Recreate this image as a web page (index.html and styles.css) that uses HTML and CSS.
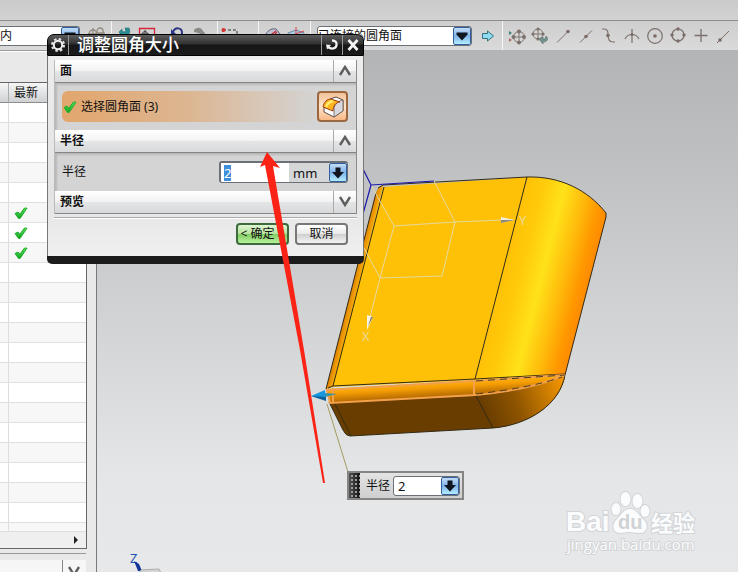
FILE: index.html
```html
<!DOCTYPE html>
<html lang="zh-CN">
<head>
<meta charset="utf-8">
<meta name="viewport" content="width=device-width, initial-scale=1">
<title>调整圆角大小</title>
<link rel="stylesheet" href="styles.css">
</head>
<body>
<svg class="defs" width="0" height="0" aria-hidden="true">
  <defs>
    <linearGradient id="tick-fill" x1="0" y1="0" x2="0" y2="1">
      <stop offset="0" stop-color="#5be05b"/><stop offset="1" stop-color="#12a31f"/>
    </linearGradient>
    <symbol id="tick" viewBox="0 0 14 14">
      <path d="M1 7.500 4 6l1.800 2.200L10.500 2l2.500.2L6 12.600 4.500 12.400Z" fill="url(#tick-fill)" stroke="#1fae2e" stroke-width="1" stroke-linejoin="round"/>
    </symbol>
    <symbol id="arrow-down" viewBox="0 0 16 16">
      <path d="M5.500 2.500h5v4.500h3.500L8 13.500 2 7h3.500z" fill="#10151f"/>
    </symbol>
    <symbol id="triangle-down" viewBox="0 0 16 16">
      <path d="M2.500 4.500h11v2L8 12.500 2.500 6.500z" fill="#10151f"/>
    </symbol>
    <symbol id="chevron-up" viewBox="0 0 14 12">
      <path d="M2 10 7 2l5 8" fill="none" stroke="#5e5e5e" stroke-width="2.400"/>
    </symbol>
    <symbol id="chevron-down" viewBox="0 0 14 12">
      <path d="M2 1l5 8 5-8" fill="none" stroke="#5e5e5e" stroke-width="2.400"/>
    </symbol>
  </defs>
</svg>
<div class="app">
  <header class="band"></header>
  <div class="toolbar" role="toolbar" aria-label="选择">
    <div class="group group-scope">
      <div class="combo combo-scope">
        <select aria-label="范围"><option>内</option></select>
        <span class="drop"><svg width="16" height="16"><use href="#triangle-down"/></svg></span>
      </div>
      <button class="tool" aria-label="锁定"><svg width="18" height="18" viewBox="0 0 18 18" fill="none" stroke="#948b80" stroke-width="1.300"><circle cx="6" cy="7" r="4"/><path d="M1 7h10M6 1v11"/><path d="M10 7V4a3 3 0 0 1 6 0v3"/><path d="M9 6h8v6H9z" fill="#a89f90"/></svg></button>
    </div>
    <div class="group group-edit">
      <button class="tool" aria-label="返回"><svg width="18" height="18" viewBox="0 0 18 18"><path d="M4 5 7 2v2l2 1 2-1-1-3h4c2 4 0 9-6 9v2z" fill="#2b8f92" stroke="#1e6c74" stroke-width=".6"/></svg></button>
      <button class="tool" aria-label="定向"><svg width="18" height="18" viewBox="0 0 18 18" fill="none"><path d="M1.500 1.500h15v14h-15z" stroke="#d6263a" stroke-width="1.300"/><circle cx="7" cy="7" r="2.500" stroke="#444"/><path d="M3 7h8M7 3v8" stroke="#444"/></svg></button>
      <span class="caret"></span>
      <button class="tool" aria-label="撤消"><svg width="18" height="18" viewBox="0 0 18 18"><path d="M5 5c2-5 9-5 9 1 0 3-2 5-4 6" fill="none" stroke="#2b3587" stroke-width="2"/><path d="M3 2v6h6z" fill="#2b3587"/></svg></button>
      <button class="tool" aria-label="重做"><svg width="18" height="18" viewBox="0 0 18 18"><path d="M3 3c3-3 7-3 9 1l2 2v3L7 6 3 5z" fill="#8a8a86"/></svg></button>
    </div>
    <div class="group group-box">
      <button class="tool" aria-label="框选"><svg width="18" height="18" viewBox="0 0 18 18"><path d="M2 3h14v12H2z" fill="none" stroke="#333" stroke-dasharray="3 2"/><circle cx="2.500" cy="3" r="2" fill="#d8302a"/></svg></button>
      <span class="caret"></span>
    </div>
    <div class="group group-view">
      <button class="tool" aria-label="着色"><svg width="18" height="18" viewBox="0 0 18 18"><path d="M1 9c2-5 6-8 11-7l4 5v5H1z" fill="#bfc3d4" stroke="#5b5f72"/><path d="M4 10 12 4M7 11l6-6" stroke="#c52f3a" stroke-width="1.300"/></svg></button>
      <button class="tool" aria-label="截面"><svg width="20" height="18" viewBox="0 0 20 18"><path d="M2 6 10 3l8 3v8H2z" fill="#a9cfe8" stroke="#73849a"/><path d="M10 0v16M1 10 18 4" stroke="#d9404b"/></svg></button>
    </div>
    <div class="group group-filter">
      <div class="combo combo-filter">
        <select aria-label="面规则"><option>已连接的圆角面</option></select>
        <span class="drop"><svg width="16" height="16"><use href="#triangle-down"/></svg></span>
      </div>
      <button class="tool" aria-label="下一个"><svg width="14" height="14" viewBox="0 0 14 14"><path d="M1.500 4.500h5V2l6 5-6 5V9.500h-5z" fill="#8edcf0" stroke="#33707d"/></svg></button>
    </div>
    <div class="group group-snap">
      <button class="tool" aria-label="启用捕捉"><svg width="18" height="18" viewBox="0 0 18 18" fill="none" stroke="#81766f"><circle cx="11" cy="10" r="5.500"/><path d="M5 10h12M11 4v12"/><g fill="#7c716b" stroke="none"><circle cx="11" cy="4.500" r="2"/><circle cx="11" cy="15.500" r="2"/><circle cx="5.500" cy="10" r="2"/><circle cx="16" cy="10" r="2"/><path d="M1 4l3 2-3 2z" fill="#3b8377"/><path d="M1 11l3 2-3 2z" fill="#a8706a"/></g></svg></button>
      <button class="tool" aria-label="清除捕捉"><svg width="18" height="18" viewBox="0 0 18 18" fill="none" stroke="#81766f"><circle cx="7" cy="7" r="5"/><path d="M2 7h10M7 2v10"/><g fill="#7c716b" stroke="none"><circle cx="7" cy="2" r="1.600"/><circle cx="7" cy="12" r="1.600"/><circle cx="2" cy="7" r="1.600"/><circle cx="12" cy="7" r="1.600"/></g><path d="M8 12l4-2v2c2 0 3-1 3-3 3 3 1 6-3 6v2z" fill="#73908f" stroke="#728583"/></svg></button>
      <button class="tool" aria-label="端点"><svg width="18" height="18" viewBox="0 0 18 18"><path d="M3 15.500 14 4.500" stroke="#7b706b"/><circle cx="14" cy="4.500" r="1.800" fill="#7b6a66"/></svg></button>
      <button class="tool" aria-label="中点"><svg width="18" height="18" viewBox="0 0 18 18"><path d="M3 15.500 15 3.500" stroke="#7b706b"/><circle cx="9" cy="9.500" r="1.800" fill="#7b6a66"/></svg></button>
      <button class="tool" aria-label="控制点"><svg width="18" height="18" viewBox="0 0 18 18"><path d="M2 2h2c4 0 4 3 4 6 0 4 1 7 5 7h2" fill="none" stroke="#7b706b" stroke-width="1.200"/><circle cx="8" cy="8.500" r="1.800" fill="#7b6a66"/></svg></button>
      <button class="tool" aria-label="交点"><svg width="18" height="18" viewBox="0 0 18 18" fill="none" stroke="#7b706b" stroke-width="1.200"><path d="M9 2v14M2 12c3-6 11-6 14 0"/><circle cx="9" cy="7.500" r="1.500" fill="#7b6a66" stroke="none"/></svg></button>
      <button class="tool" aria-label="圆心"><svg width="18" height="18" viewBox="0 0 18 18"><circle cx="9" cy="9" r="7.300" fill="none" stroke="#7b706b" stroke-width="1.200"/><circle cx="9" cy="9" r="1.800" fill="#7b6a66"/></svg></button>
      <button class="tool" aria-label="象限点"><svg width="18" height="18" viewBox="0 0 18 18"><circle cx="9" cy="8" r="6" fill="none" stroke="#7b706b" stroke-width="1.200"/><g fill="#7b6a66"><circle cx="9" cy="2" r="1.700"/><circle cx="9" cy="14" r="1.700"/><circle cx="3" cy="8" r="1.700"/><circle cx="15" cy="8" r="1.700"/></g></svg></button>
      <button class="tool" aria-label="现有点"><svg width="18" height="18" viewBox="0 0 18 18"><path d="M9 2v13M2.500 8.500h13" stroke="#7b706b" stroke-width="1.300"/></svg></button>
      <button class="tool" aria-label="曲线上的点"><svg width="18" height="18" viewBox="0 0 18 18"><path d="M2 16 14 4" stroke="#7b706b"/><circle cx="5" cy="13" r="1.800" fill="#7b6a66"/></svg></button>
    </div>
  </div>

  <main class="workspace">
    <aside class="navigator">
      <div class="nav-title"></div>
      <div class="nav-box">
        <div class="rows">
          <table>
            <thead><tr><th class="name"></th><th>最新</th></tr></thead>
            <tbody>
              <tr><td></td><td></td></tr><tr><td></td><td></td></tr><tr><td></td><td></td></tr>
              <tr><td></td><td></td></tr><tr><td></td><td></td></tr>
              <tr><td></td><td><svg width="14" height="14"><use href="#tick"/></svg></td></tr>
              <tr><td></td><td><svg width="14" height="14"><use href="#tick"/></svg></td></tr>
              <tr><td></td><td><svg width="14" height="14"><use href="#tick"/></svg></td></tr>
              <tr><td></td><td></td></tr><tr><td></td><td></td></tr><tr><td></td><td></td></tr>
              <tr><td></td><td></td></tr><tr><td></td><td></td></tr><tr><td></td><td></td></tr>
              <tr><td></td><td></td></tr><tr><td></td><td></td></tr><tr><td></td><td></td></tr>
              <tr><td></td><td></td></tr><tr><td></td><td></td></tr><tr><td></td><td></td></tr>
              <tr><td></td><td></td></tr><tr><td></td><td></td></tr>
            </tbody>
          </table>
        </div>
        <div class="scroll"><button aria-label="向右滚动"><svg width="6" height="8" viewBox="0 0 6 8"><path d="M1 0v8l4-4z" fill="#222"/></svg></button></div>
      </div>
      <div class="nav-foot">
        <button aria-label="展开"><svg width="14" height="12"><use href="#chevron-down"/></svg></button>
      </div>
    </aside>

    <section class="viewport" aria-label="图形窗口">
      <svg class="scene" width="100%" height="100%">
        <defs>
          <linearGradient id="round" gradientUnits="userSpaceOnUse" x1="527" y1="177" x2="609" y2="198">
            <stop offset="0" stop-color="#ffc107"/><stop offset=".22" stop-color="#ffcb0a"/><stop offset=".46" stop-color="#ffe21a"/><stop offset=".72" stop-color="#ffb90a"/><stop offset=".9" stop-color="#ff9800"/><stop offset="1" stop-color="#ff8c00"/>
          </linearGradient>
          <linearGradient id="side" gradientUnits="userSpaceOnUse" x1="351" y1="286" x2="359" y2="288">
            <stop offset="0" stop-color="#d87900"/><stop offset="1" stop-color="#ffb60a"/>
          </linearGradient>
          <linearGradient id="lip" gradientUnits="userSpaceOnUse" x1="400" y1="383" x2="401" y2="400">
            <stop offset="0" stop-color="#ffb90a"/><stop offset=".4" stop-color="#f49c05"/><stop offset="1" stop-color="#a96200"/>
          </linearGradient>
          <linearGradient id="under" gradientUnits="userSpaceOnUse" x1="485" y1="412" x2="562" y2="382">
            <stop offset="0" stop-color="#693d00"/><stop offset=".4" stop-color="#8f5500"/><stop offset="1" stop-color="#f09400"/>
          </linearGradient>
        </defs>
        <g transform="translate(-97 -50)">
          <path d="M383 187 527 177 475 380 332 387z" fill="#ffc107"/>
          <path d="M527 177C560 176 588 190 606 213V217L565 375 475 380z" fill="url(#round)"/>
          <path d="M383 186q-5 0-7 7L326 389l7-2z" fill="url(#side)"/>
          <path d="M329 402 475 395Q530 390 565 376C560 404 529 425 493 428L350 436q-4 0-7-6z" fill="#693d00"/>
          <path d="M475 395Q530 390 565 376C560 404 529 425 493 428z" fill="url(#under)"/>
          <path d="M326 389 475 380 565 375Q530 391 475 396L330 403z" fill="url(#lip)"/>
          <g fill="none" stroke="#332b17">
            <path d="M378 188 383 185 527 177C560 176 588 190 606 213V217L565 375C560 404 529 425 493 428L350 436q-4 0-7-6L329 402"/>
            <path d="M527 177 475 379M476 396 493 428M384 187 333 386M376 193 326 389M335 404 351 436"/>
            <path d="M328 388 333 386 475 379 565 374"/>
          </g>
          <path d="M327 390 475 381 565 375Q530 390 475 395L330 403zM474 381v14M333 388v14" fill="none" stroke="#f2a04b" stroke-width="2"/>
          <path d="M476 381 565 375M476 394Q530 388 562 377" fill="none" stroke="#4c3a1d" stroke-dasharray="7 5"/>
          <g fill="none" stroke="#e5d9a0">
            <path d="M371 185 394 226 455 222 434 181M394 226 380 278 442 276 455 222 502 220M380 278 370 317M364 248 380 278"/>
          </g>
          <path d="M363 169 371 185 434 181M371 185 363 214" fill="none" stroke="#1a18ad" stroke-width="1.200"/>
          <path d="M501 217 515 220 501 223z" fill="#f1eee0"/><path d="M501 220h14l-14 3z" fill="#8e8a78"/>
          <path d="M367 315 373 317 367 330z" fill="#f6f3e6"/><path d="M371 317h2l-5 9z" fill="#7a7668"/>
          <text class="axis" x="519" y="225">Y</text>
          <text class="axis" x="362" y="341">X</text>
          <path d="M327 404 348 472" stroke="#a49b61"/>
          <path d="M311 396 325 390 326 400z" fill="#1697df"/><path d="M311 396l15 1v4z" fill="#0e5f9d"/><path d="M325 393 337 394 325 397z" fill="#3a92a4"/>
          <text class="axis axis-z" x="130" y="563">Z</text>
          <path d="M134 561l5 3 3 7h-4z" fill="#14349a"/>
          <path d="M141 570 159 569 161 573H139z" fill="#d4d5d7" stroke="#a9abad"/>
          <g class="watermark">
            <text class="mark-latin" x="566" y="531">Bai</text>
            <g>
              <ellipse cx="616" cy="509" rx="4.500" ry="6"/><ellipse cx="625.500" cy="499" rx="5" ry="7"/><ellipse cx="637.500" cy="501" rx="5" ry="7"/><ellipse cx="645" cy="511" rx="4.500" ry="6"/>
              <path d="M630 509c7 0 9 7 14 11 5 5 3 13-4 13-4 0-7-1-11-1s-6 1-9 1c-8 0-8-9-4-13 5-4 7-11 14-11z"/>
            </g>
            <text class="mark-du" x="618" y="529">du</text>
            <text class="mark-cjk" x="651" y="531">经验</text>
            <text class="mark-url" x="567" y="550">jingyan.baidu.com</text>
          </g>
        </g>
      </svg>
      <form class="callout">
        <span class="grip"></span>
        <label for="quick-radius">半径</label>
        <span class="combo combo-quick">
          <input id="quick-radius" value="2">
          <button type="button" class="drop" aria-label="选项"><svg width="16" height="16"><use href="#arrow-down"/></svg></button>
        </span>
      </form>
    </section>
  </main>
</div>

<form class="dialog" role="dialog" aria-labelledby="dialog-title">
  <header class="titlebar">
    <button type="button" aria-label="设置"><svg width="16" height="16" viewBox="0 0 16 16"><circle cx="8" cy="8" r="6" fill="none" stroke="#e5e5e5" stroke-width="2" stroke-dasharray="2.500 2.210"/><circle cx="8" cy="8" r="4.200" fill="none" stroke="#f0f0f0" stroke-width="2"/></svg></button>
    <h1 id="dialog-title">调整圆角大小</h1>
    <button type="button" aria-label="重置"><svg width="14" height="14" viewBox="0 0 14 14"><path d="M7 2.500c3.500 0 5 2 4.500 4.700-.6 3.500-5 4.500-8.500 1.800" fill="none" stroke="#f3f3f3" stroke-width="2.300"/><path d="M1 6.500 6 7 2 11.500z" fill="#f3f3f3"/></svg></button>
    <button type="button" aria-label="关闭"><svg width="14" height="14" viewBox="0 0 14 14"><path d="M2.500 2 11.500 12M11.500 2 2.500 12" stroke="#f3f3f3" stroke-width="2.800"/></svg></button>
  </header>
  <div class="dialog-body">
    <div class="sections">
      <h2><span>面</span><button type="button" aria-label="折叠面"><svg width="14" height="12"><use href="#chevron-up"/></svg></button></h2>
      <div class="panel panel-face">
        <div class="pick"><svg width="14" height="14"><use href="#tick"/></svg><span>选择圆角面 (3)</span></div>
        <button type="button" class="face-button" aria-label="选择圆角面">
          <svg width="24" height="24" viewBox="0 0 24 24" stroke-linejoin="round"><path d="M9 4 15 2l7 3v11l-9 6-10-5v-4z" fill="#fff" stroke="#5a4a44"/><path d="M13 13c1-4 4-7 9-8v11l-9 6z" fill="#d9d8dc" stroke="#6a5a54" stroke-width=".8"/><path d="M2 12C3 7 6 4 10 4l9 3c-4 0-7 4-7 9z" fill="#ffb51d" stroke="#9c3a14"/><path d="M5 12c1-3 3-5 7-6" stroke="#ffed72" stroke-width="2.500" fill="none"/></svg>
        </button>
      </div>
      <h2><span>半径</span><button type="button" aria-label="折叠半径"><svg width="14" height="12"><use href="#chevron-up"/></svg></button></h2>
      <div class="panel panel-radius">
        <label for="radius">半径</label>
        <div class="combo combo-radius">
          <input id="radius" value="2">
          <select aria-label="单位"><option>mm</option></select>
          <span class="drop"><svg width="16" height="16"><use href="#arrow-down"/></svg></span>
        </div>
      </div>
      <h2><span>预览</span><button type="button" aria-label="展开预览"><svg width="14" height="12"><use href="#chevron-down"/></svg></button></h2>
    </div>
    <div class="actions">
      <button type="submit" class="ok">&lt; 确定 &gt;</button>
      <button type="button">取消</button>
    </div>
  </div>
</form>
<svg class="pointer" width="70" height="334" viewBox="258 151 70 334" aria-hidden="true"><path d="M267 152 280 168 273 166 304 350 325 483 323 483 300 350 265 165 260 167z" fill="#fb2316"/></svg>
<script src="script.js"></script>
</body>
</html>
```
FILE: styles.css
```css
* {
  box-sizing: border-box;
}

body {
  margin: 0;
  font: 12px/16px "Noto Sans", "Noto Sans CJK SC", sans-serif;
  color: #111;
  overflow: hidden;
}

button,
input,
select {
  font: inherit;
  color: inherit;
  margin: 0;
  padding: 0;
  border: 0;
  background: none;
  appearance: none;
  outline: 0;
}

svg {
  display: block;
  flex: none;
}

.defs {
  position: absolute;
}

.app {
  display: flex;
  flex-direction: column;
  height: 100vh;
  background: #e9e9e9;
}

.band {
  flex: none;
  height: 20px;
  background: linear-gradient(#cbcbcb, #d2d2d2);
}

.toolbar {
  flex: none;
  display: flex;
  height: 30px;
  border-top: 1px solid #8b8f8a;
  background: linear-gradient(#cecece, #dadada);
}

.group {
  flex: none;
  display: flex;
  align-items: center;
  border-left: 1px solid #f6f6f6;
}

.group-scope {
  width: 111px;
  gap: 4px;
  border-left: 0;
}

.group-edit {
  width: 106px;
}

.group-box {
  width: 41px;
}

.group-view {
  width: 52px;
  justify-content: center;
}

.group-filter {
  width: 192px;
  padding-left: 6px;
  gap: 4px;
}

.group-snap {
  padding-left: 2px;
}

.tool {
  width: 23px;
  height: 24px;
  display: flex;
  align-items: center;
  justify-content: center;
}

.caret {
  width: 5px;
  height: 4px;
  margin: 0 1px;
  background: #222;
  clip-path: polygon(0 0, 100% 0, 100% 25%, 50% 100%, 0 25%);
}

.combo {
  display: flex;
  align-items: stretch;
  height: 20px;
  border: 1px solid #6b7076;
  border-radius: 3px;
  background: #fff;
  overflow: hidden;
}

.combo select,
.combo input {
  flex: 1;
  min-width: 0;
}

.combo-scope {
  width: 80px;
  border-left: 0;
  border-radius: 0 3px 3px 0;
}

.combo-filter {
  width: 155px;
}

.drop {
  flex: none;
  width: 18px;
  display: flex;
  align-items: center;
  justify-content: center;
  border: 1px solid #315f9e;
  border-radius: 2px;
  background: linear-gradient(#c4dcf5, #7fb3ea 50%, #b4ecff);
}

.workspace {
  flex: 1;
  min-height: 0;
  display: flex;
}

.navigator {
  flex: none;
  width: 97px;
  display: flex;
  flex-direction: column;
  border-right: 1px solid #77797b;
}

.nav-title {
  height: 32px;
  border-top: 1px solid #999;
  box-shadow: inset 0 1px #fff;
}

.nav-box {
  flex: 1;
  min-height: 0;
  display: flex;
  flex-direction: column;
  margin-right: 9px;
  border: solid #666;
  border-width: 1px 1px 1px 0;
  background: #fff;
}

.rows {
  flex: 1;
  min-height: 0;
  overflow: hidden;
}

.rows table {
  width: 100%;
  table-layout: fixed;
  border-collapse: separate;
  border-spacing: 0;
}

.rows th {
  height: 20px;
  padding: 0 5px;
  border-bottom: 1px solid #8d8d8d;
  background: linear-gradient(#f6f6f6, #cfd1d3);
  font-weight: 400;
  text-align: left;
}

.rows .name {
  width: 9px;
  padding: 0;
  border-right: 1px solid #aaa;
}

.rows td {
  height: 20px;
  padding: 0 5px;
  border-bottom: 1px solid #e0e0e0;
}

.rows td:first-child {
  padding: 0;
  border-right: 1px solid #dedede;
}

.rows tbody tr:nth-child(even) {
  background: #f7f7f7;
}

.scroll {
  flex: none;
  height: 17px;
  display: flex;
  justify-content: flex-end;
  padding-right: 7px;
  background: #efefef;
  border-top: 1px solid #ddd;
}

.nav-foot {
  flex: none;
  height: 12px;
  margin: 11px 10px 0 0;
  display: flex;
  justify-content: flex-end;
  background: #f6f6f6;
  box-shadow: 0 -6px #e9e9e9, 0 -7px #999;
  overflow: visible;
}

.nav-foot button {
  display: flex;
  width: 24px;
  padding: 6px 4px 0;
  border-left: 1px solid #888;
  overflow: hidden;
}

.viewport {
  flex: 1;
  position: relative;
  overflow: hidden;
  background: linear-gradient(#b3b4b6, #bfc0c2 22%, #d6d7d8 58%, #e5e6e8 82%, #e7e8ea);
}

.axis {
  font: 13px "Noto Sans", sans-serif;
  fill: #e8d89a;
}

.axis-z {
  fill: #1c4fae;
}

.watermark {
  fill: #fbfcfd;
  stroke: #d2d4d6;
  stroke-width: 2px;
  paint-order: stroke;
}

.mark-latin {
  font: bold 28px "Liberation Sans", sans-serif;
}

.mark-du {
  font: bold 20px "Liberation Sans", sans-serif;
  fill: #d0d2d4;
  stroke: none;
}

.mark-cjk {
  font: bold 22px "Noto Sans CJK SC", sans-serif;
}

.mark-url {
  font: 15px "Open Sans", sans-serif;
}

.callout {
  position: absolute;
  left: 250px;
  top: 421px;
  display: flex;
  align-items: center;
  height: 29px;
  padding-right: 2px;
  border: 2px solid #858585;
  background: linear-gradient(#e3e3e3, #cfcfcf);
}

.grip {
  align-self: stretch;
  width: 11px;
  margin-right: 6px;
  background: radial-gradient(circle at 2px 2px, #999 1px, transparent 1px) 1px 5px / 4px 4px, linear-gradient(90deg, #555, #111);
}

.callout label {
  margin-right: 3px;
}

.combo-quick {
  width: 67px;
}

.combo-quick input {
  padding-left: 4px;
  font-size: 13px;
}

.dialog {
  position: absolute;
  left: 47px;
  top: 34px;
  width: 317px;
  border-bottom: 8px solid #1c1c1c;
  border-radius: 7px 7px 5px 5px;
  background: #e9e9e9;
}

.titlebar {
  display: flex;
  height: 22px;
  background: linear-gradient(#5c5c5c, #303030 45%, #161616 50%, #1b1b1b);
  border: 1px solid #000;
  border-radius: 7px 7px 0 0;
}

.titlebar button {
  width: 21px;
  display: flex;
  align-items: center;
  justify-content: center;
  border-left: 1px solid #999;
}

.titlebar button:first-child {
  border-left: 0;
  border-right: 1px solid #999;
}

.titlebar h1 {
  flex: 1;
  margin: 0;
  padding-left: 8px;
  font: 500 17px/18px "Noto Sans CJK SC", sans-serif;
  color: #fff;
}

.dialog-body {
  padding: 4px 6px 11px;
  border: solid #777;
  border-width: 0 1px;
  background: linear-gradient(#ededed, #e3e3e3 70%, #f0f0f0);
}

.sections {
  border-right: 1px solid #8b8b8b;
  border-left: 1px solid #bbb;
}

.sections h2 {
  display: flex;
  align-items: center;
  justify-content: space-between;
  height: 23px;
  margin: 0;
  padding-left: 5px;
  border-bottom: 1px solid #858585;
  background: linear-gradient(#fff, #f2f2f2 50%, #e3e5e6 52%, #d7d9db);
  font-size: 12px;
  line-height: 16px;
  font-weight: 700;
}

.sections h2 button {
  width: 23px;
  height: 22px;
  display: flex;
  align-items: center;
  justify-content: center;
  border-left: 1px solid #aaa;
}

.panel {
  display: flex;
  align-items: center;
  justify-content: space-between;
  padding: 0 8px 0 7px;
  background: #d4d4d4;
  box-shadow: inset 2px 2px 2px #b9b9b9;
}

.panel-face {
  height: 47px;
}

.pick {
  flex: 1;
  display: flex;
  align-items: center;
  gap: 4px;
  height: 31px;
  padding-left: 1px;
  border-radius: 6px;
  background: linear-gradient(90deg, #e2a66d, #dcb692 50%, #d4d4d4);
}

.face-button {
  width: 31px;
  height: 31px;
  display: flex;
  align-items: center;
  justify-content: center;
  border: 2px solid #9b6841;
  border-radius: 4px;
  background: linear-gradient(#f3c197, #ffe6cf 50%, #f8b786);
}

.panel-radius {
  height: 38px;
}

.combo-radius {
  width: 129px;
  height: 22px;
  border-width: 2px 1px 1px 2px;
  background: #d5d6d8;
  font-size: 13px;
}

.combo-radius input {
  flex: 0 0 68px;
  width: 68px;
  padding-left: 3px;
  background: #fff;
}

.combo-radius input::selection {
  background: #3d8fdc;
  color: #fff;
}

.combo-radius select {
  padding-left: 4px;
}

.actions {
  display: flex;
  justify-content: flex-end;
  gap: 6px;
  margin-top: 3px;
  padding: 5px 9px 0 0;
  border-top: 1px solid #aaa;
  box-shadow: inset 0 1px #fff;
}

.actions button {
  width: 53px;
  height: 22px;
  border: 2px solid #777;
  border-radius: 4px;
  background: linear-gradient(#fff, #e9e9e9 50%, #cfcfcf 52%, #f4f4f4);
  white-space: nowrap;
}

.actions .ok {
  border-color: #3d6b3d;
  background: linear-gradient(#dff5d3, #b4e39c 50%, #83ce66 52%, #b7f09a);
}

.pointer {
  position: absolute;
  left: 258px;
  top: 151px;
  pointer-events: none;
}
```
FILE: script.js
```javascript
const radius = document.getElementById("radius");
radius.focus();
radius.select();
```
